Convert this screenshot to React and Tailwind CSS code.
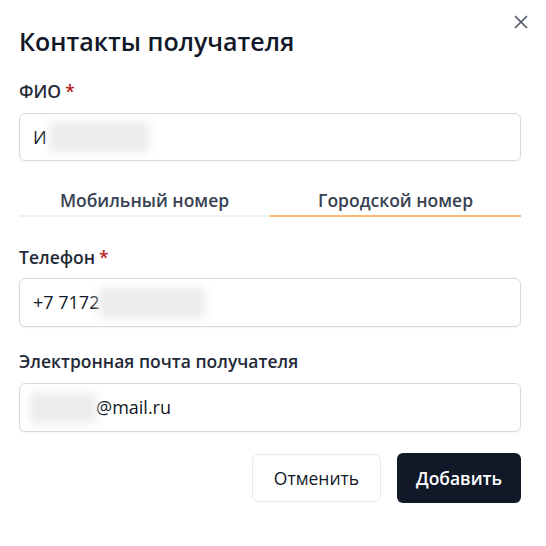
import React from 'react';
import { X } from 'lucide-react';

const Label = ({ children, required = false, className = '' }) => (
  <div className={`text-[17.5px] leading-[22px] font-semibold text-[#1f2937] ${className}`}>
    {children}
    {required && <span className="ml-1 text-[#b91c1c]">*</span>}
  </div>
);

const Blur = ({ className = '' }) => (
  <span className={`inline-block h-[30px] bg-[#ececec] blur-[4px] ${className}`} />
);

const Field = ({ children, className = '' }) => (
  <div
    className={`flex items-center rounded-md border border-[#d9d9d9] bg-white px-[13px] text-[18px] text-[#111827] shadow-[0_1px_2px_rgba(0,0,0,0.04)] ${className}`}
  >
    {children}
  </div>
);

export default function App() {
  return (
    <div
      className="relative h-[546px] w-[546px] bg-white pl-[19px] pr-[25px] pt-[25px]"
      style={{ fontFamily: '"Open Sans", "Noto Sans", sans-serif' }}
    >
      <button className="absolute right-[14px] top-[11px] text-[#4b5563]">
        <X size={22} strokeWidth={1.8} />
      </button>

      <h2 className="text-[25px] leading-8 font-semibold text-[#111827]">Контакты получателя</h2>

      <Label required className="mt-[23px]">ФИО</Label>
      <Field className="mt-[11px] h-[48px]">
        <span>И</span>
        <Blur className="ml-[2px] w-[100px]" />
      </Field>

      <div className="mt-[28px] grid grid-cols-2 text-[17.5px] leading-[22px] font-semibold">
        <div className="border-b-2 border-[#f0f0f0] pb-[4px] text-center text-[#374151]">Мобильный номер</div>
        <div className="border-b-2 border-[#fdba74] pb-[4px] text-center text-[#374151]">Городской номер</div>
      </div>

      <Label required className="mt-[29px]">Телефон</Label>
      <Field className="mt-[10px] h-[49px]">
        <span>+7 7172</span>
        <Blur className="w-[106px]" />
      </Field>

      <Label className="mt-[23px]">Электронная почта получателя</Label>
      <Field className="mt-[11px] h-[49px]">
        <Blur className="-ml-[3px] w-[66px]" />
        <span>@mail.ru</span>
      </Field>

      <div className="mt-[22px] flex justify-end gap-4">
        <button className="h-[48px] w-[129px] rounded-md border border-[#e5e9f0] bg-white text-[17.5px] font-medium text-[#111827]">
          Отменить
        </button>
        <button className="h-[50px] w-[124px] -mt-px rounded-md bg-[#111827] text-[17.5px] font-semibold text-white">
          Добавить
        </button>
      </div>
    </div>
  );
}
